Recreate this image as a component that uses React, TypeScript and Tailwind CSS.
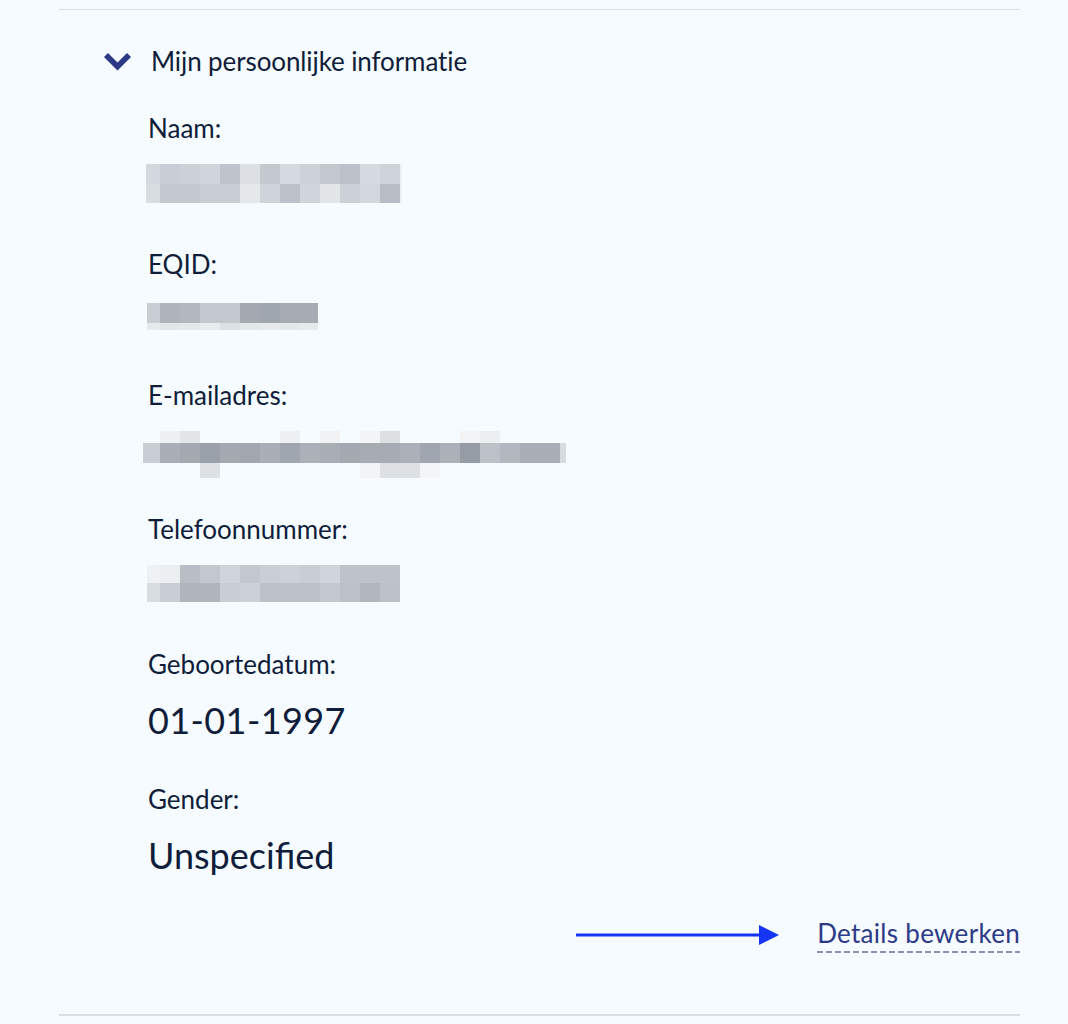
import React from "react";

type Cell = [number, string];
type Row = { h: number; cells: Cell[] };

// pixelated (censored) values, as blocks of [width, colour]
const blurred: Record<string, Row[]> = {
  naam: [
    {
      h: 20,
      cells: [
        [14, "#d3d8de"], [20, "#c9ced6"], [20, "#ccd1d8"], [20, "#d0d5dc"], [20, "#bfc4cc"], [20, "#dce0e5"],
        [20, "#c4c9d0"], [20, "#d6dbe1"], [20, "#cdd2d9"], [20, "#c3c8cf"], [20, "#bcc1c9"], [20, "#d6dbe1"],
        [20, "#cfd4db"], [2, "#eef1f4"],
      ],
    },
    {
      h: 19,
      cells: [
        [14, "#d8dde2"], [20, "#c4c9d0"], [20, "#c4c9d0"], [20, "#c9ced5"], [20, "#c9ced5"], [20, "#e4e8eb"],
        [20, "#cfd4db"], [20, "#bcc1c9"], [20, "#d0d5dc"], [20, "#e2e6e9"], [20, "#ccd1d8"], [20, "#d3d8de"],
        [20, "#b8bdc5"], [2, "#eef1f4"],
      ],
    },
  ],
  eqid: [
    {
      h: 20,
      cells: [
        [13, "#c9ced5"], [20, "#aeb3bc"], [20, "#b3b8c0"], [20, "#c3c8cf"], [20, "#c3c8cf"], [20, "#a3a8b1"],
        [20, "#a0a6b0"], [20, "#a6abb4"], [18, "#a6abb4"],
      ],
    },
    {
      h: 7,
      cells: [
        [13, "#e6eaed"], [20, "#e2e6e9"], [20, "#e4e8eb"], [20, "#e9ecef"], [20, "#dde1e5"], [20, "#e4e8eb"],
        [20, "#e6eaed"], [20, "#e4e8eb"], [18, "#e6eaed"],
      ],
    },
  ],
  email: [
    {
      h: 12,
      cells: [
        [17, "transparent"], [20, "#eef1f3"], [20, "#e3e6e9"], [80, "transparent"], [20, "#eef1f3"], [20, "transparent"],
        [20, "#f0f2f4"], [20, "transparent"], [20, "#f2f4f6"], [20, "#dce0e3"], [60, "transparent"], [20, "#f2f4f6"],
        [20, "#eceff1"],
      ],
    },
    {
      h: 20,
      cells: [
        [17, "#c9ced5"], [20, "#a9aeb7"], [20, "#a3a8b1"], [20, "#9aa1ab"], [20, "#a3a8b1"], [20, "#a1a6af"],
        [20, "#a9aeb7"], [20, "#a0a6b0"], [20, "#abb0b9"], [20, "#a8adb6"], [20, "#a3a8b1"], [20, "#a6abb4"],
        [20, "#a6abb4"], [20, "#abb0b9"], [20, "#a0a6b0"], [20, "#abb0b9"], [20, "#959ca6"], [20, "#bcc1c8"],
        [20, "#b3b8c0"], [20, "#a8adb6"], [20, "#a8adb6"], [6, "#d6dbe0"],
      ],
    },
    {
      h: 15,
      cells: [
        [57, "transparent"], [20, "#dde1e4"], [140, "transparent"], [20, "#f1f3f5"], [20, "#dde1e4"], [20, "#dde1e4"],
        [20, "#f3f5f6"],
      ],
    },
  ],
  telefoon: [
    {
      h: 18,
      cells: [
        [13, "#eff2f4"], [20, "#eceff2"], [20, "#b9bec6"], [20, "#c3c8cf"], [20, "#d0d5db"], [20, "#c3c8cf"],
        [20, "#cacfd6"], [20, "#cdd2d9"], [20, "#c9ced5"], [20, "#d0d5db"], [20, "#bec3ca"], [20, "#bec3ca"],
        [20, "#bec3ca"],
      ],
    },
    {
      h: 19,
      cells: [
        [13, "#d8dde2"], [20, "#c9ced5"], [20, "#afb4bd"], [20, "#afb4bd"], [20, "#c9ced5"], [20, "#ccd1d8"],
        [20, "#bcc1c9"], [20, "#bcc1c9"], [20, "#bcc1c9"], [20, "#c3c8cf"], [20, "#bcc1c9"], [20, "#b1b6bf"],
        [20, "#bcc1c9"],
      ],
    },
  ],
};

const Pixelated = ({ rows, className }: { rows: Row[]; className?: string }) => (
  <div className={className}>
    {rows.map((row, i) => (
      <div key={i} className="flex" style={{ height: row.h }}>
        {row.cells.map(([w, c], j) => (
          <div key={j} style={{ width: w, backgroundColor: c }} />
        ))}
      </div>
    ))}
  </div>
);

const Label = ({ children, className }: { children: React.ReactNode; className?: string }) => (
  <div className={`h-[30px] text-[26px] leading-[30px] text-[#0f1d3a] ${className ?? ""}`}>{children}</div>
);

const Value = ({ children, className }: { children: React.ReactNode; className?: string }) => (
  <div className={`h-[44px] text-[36px] leading-[44px] text-[#0f1d3a] ${className ?? ""}`}>{children}</div>
);

export default function App() {
  return (
    <div className="min-h-[1024px] w-full bg-[#f5fbfe] pt-[9px] font-['Lato',sans-serif]">
      <div className="ml-[59px] mr-[48px] border-t border-[#d9dee3]">
        <div className="flex items-center pl-[45px] pt-[37px]">
          <svg width="27" height="18" viewBox="0 0 27 18" className="shrink-0">
            <path d="M0 4 L4 0 L13.5 9.5 L23 0 L27 4 L13.5 17.5 Z" fill="#2c3785" />
          </svg>
          <span className="ml-[20px] h-[30px] text-[26px] leading-[28px] tracking-[-0.1px] text-[#0f1d3a]">
            Mijn persoonlijke informatie
          </span>
        </div>

        <div className="flex flex-col pl-[89px]">
          <Label className="mt-[36px]">Naam:</Label>
          <Pixelated rows={blurred.naam} className="ml-[-2px] mt-[21px]" />

          <Label className="mt-[46px]">EQID:</Label>
          <Pixelated rows={blurred.eqid} className="ml-[-1px] mt-[24px]" />

          <Label className="mt-[50px]">E-mailadres:</Label>
          <Pixelated rows={blurred.email} className="ml-[-5px] mt-[21px]" />

          <Label className="mt-[36px]">Telefoonnummer:</Label>
          <Pixelated rows={blurred.telefoon} className="ml-[-1px] mt-[21px]" />

          <Label className="mt-[47px]">Geboortedatum:</Label>
          <Value className="mt-[19px] tracking-[0.4px]">01-01-1997</Value>

          <Label className="mt-[42px]">Gender:</Label>
          <Value className="mt-[19px]">Unspecified</Value>
        </div>

        <div className="mt-[41px] flex items-center justify-end">
          <svg width="203" height="22" viewBox="0 0 203 22" className="shrink-0">
            <line x1="0" y1="10" x2="186" y2="10" stroke="#1634f4" strokeWidth="3" />
            <path d="M183 0 L203 10 L183 20 Z" fill="#1634f4" />
          </svg>
          <a href="#" className="ml-[38px] flex flex-col">
            <span className="h-[30px] text-[26px] leading-[30px] tracking-[0.3px] text-[#2d3a87]">
              Details bewerken
            </span>
            <span className="mt-[3px] h-[2px] w-full bg-[linear-gradient(to_right,#8a8fb6_6px,transparent_6px)] bg-[length:9px_2px] bg-repeat-x" />
          </a>
        </div>

        <div className="mt-[61px] border-t-2 border-[#d9dee3]" />
      </div>
    </div>
  );
}
